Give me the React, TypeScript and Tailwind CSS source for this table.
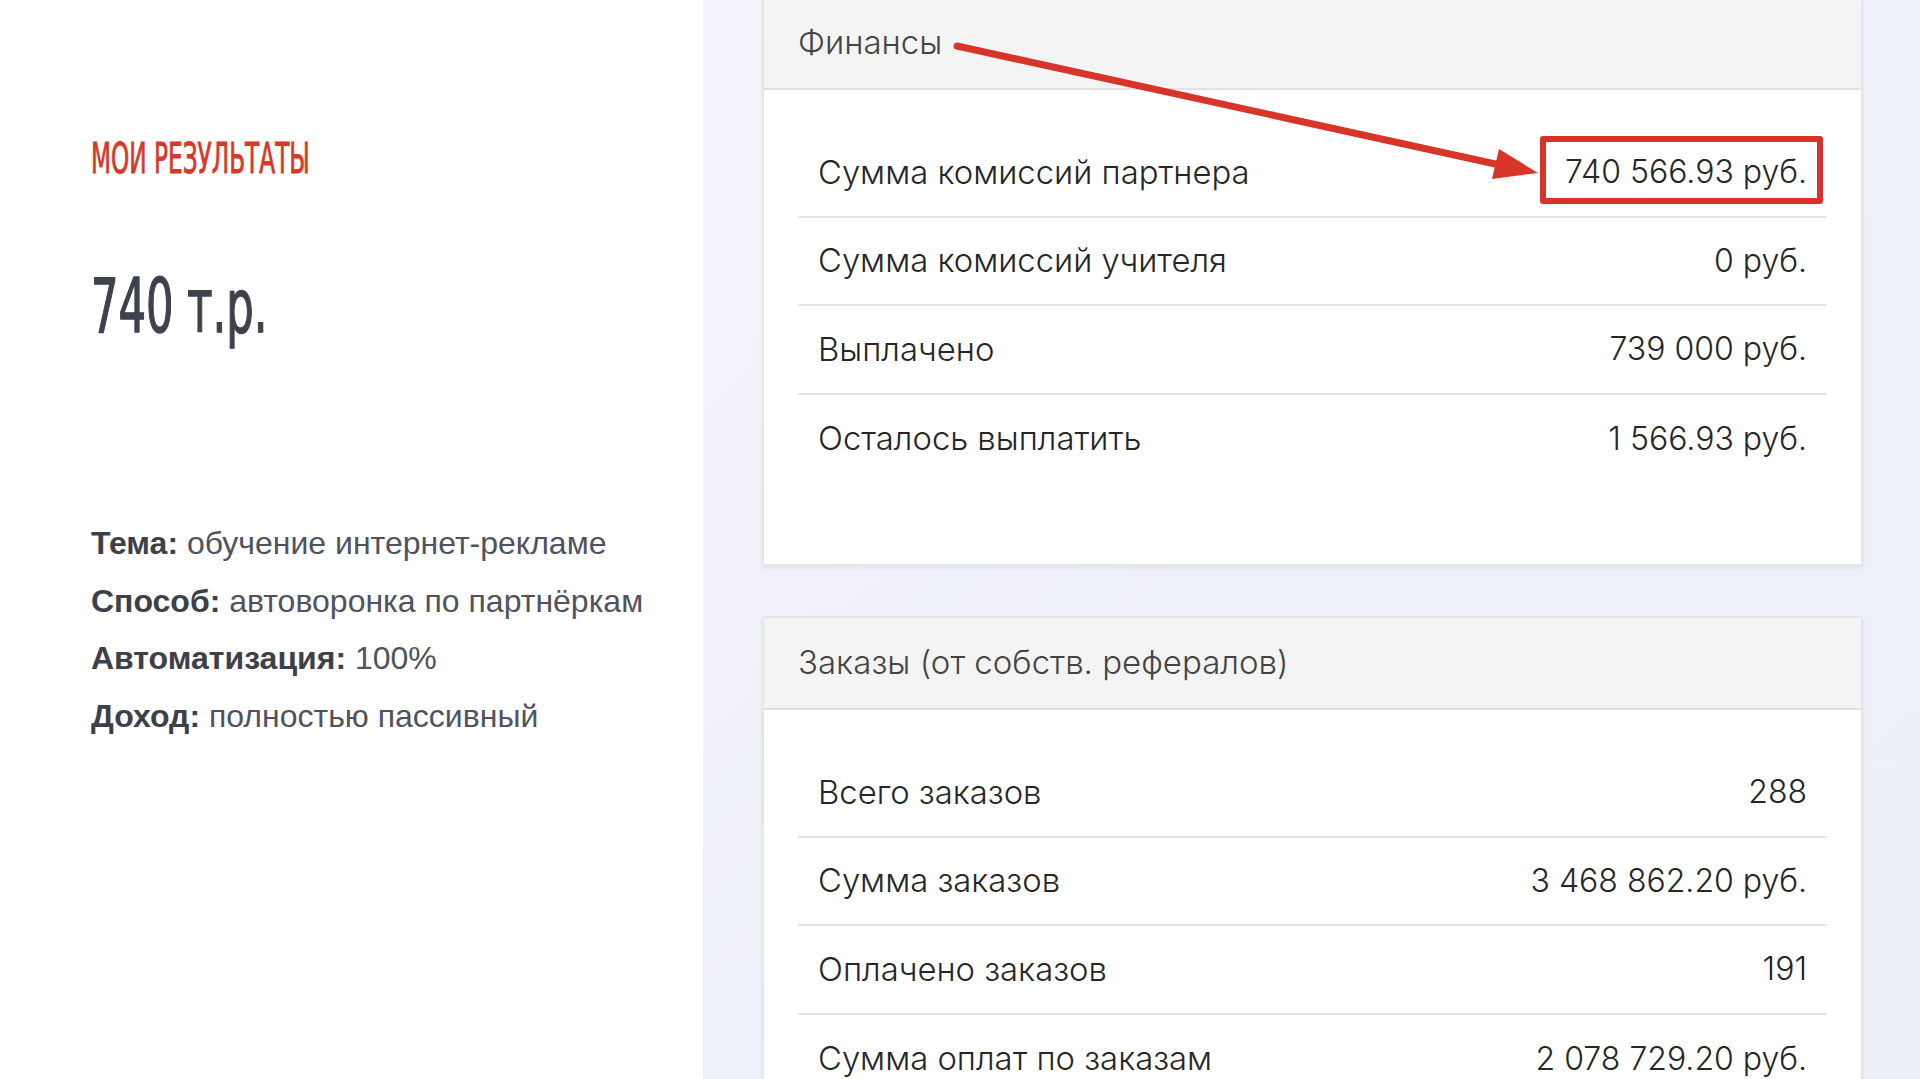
import React from 'react';

type Row = { label: string; value: string; highlight?: boolean };

const finance: Row[] = [
  { label: 'Сумма комиссий партнера', value: '740 566.93 руб.', highlight: true },
  { label: 'Сумма комиссий учителя', value: '0 руб.' },
  { label: 'Выплачено', value: '739 000 руб.' },
  { label: 'Осталось выплатить', value: '1 566.93 руб.' },
];

const orders: Row[] = [
  { label: 'Всего заказов', value: '288' },
  { label: 'Сумма заказов', value: '3 468 862.20 руб.' },
  { label: 'Оплачено заказов', value: '191' },
  { label: 'Сумма оплат по заказам', value: '2 078 729.20 руб.' },
];

const facts = [
  { k: 'Тема:', v: 'обучение интернет-рекламе' },
  { k: 'Способ:', v: 'автоворонка по партнёркам' },
  { k: 'Автоматизация:', v: '100%' },
  { k: 'Доход:', v: 'полностью пассивный' },
];

const condensed = { fontFamily: '"Liberation Sans Narrow", "DejaVu Sans Condensed", sans-serif' };

const StatRow: React.FC<{ row: Row; last: boolean }> = ({ row, last }) => (
  <div className={`h-[88.5px] flex items-center justify-between px-[20px] ${last ? '' : 'border-b-2 border-[#e4e4e6]'}`}>
    <span className="text-[32.8px]">{row.label}</span>
    {row.highlight ? (
      <span className="relative">
        {row.value}
        {/* red frame from the annotation */}
        <span className="absolute -left-[25px] -right-[16px] -top-[12px] -bottom-[8px] border-[6px] border-[#d8322a] rounded-[3px]" />
      </span>
    ) : (
      <span>{row.value}</span>
    )}
  </div>
);

const Card: React.FC<{ title: string; rows: Row[]; className?: string }> = ({ title, rows, className }) => (
  <div className={`bg-white border-2 border-[#e6e6ea] shadow-[0_2px_4px_rgba(0,0,0,0.06)] ${className ?? ''}`}>
    <div className="h-[92px] bg-[#f4f4f4] border-b-2 border-[#e2e2e4] flex items-center px-[34px] text-[33px] text-[#444] font-light">
      {title}
    </div>
    <div className="px-[34px] pt-[39px] text-[32px] font-light text-[#262626]">
      {rows.map((r, i) => (
        <StatRow key={r.label} row={r} last={i === rows.length - 1} />
      ))}
    </div>
  </div>
);

export default function App() {
  return (
    <div
      className="relative w-[1920px] h-[1079px] overflow-hidden flex"
      style={{ fontFamily: 'Inter, "Noto Sans", sans-serif' }}
    >
      {/* left column */}
      <div className="w-[703px] shrink-0 bg-white pl-[91px] pt-[137px]">
        <div
          className="text-[43px] leading-none text-[#d6392a] origin-left scale-x-[0.6] [-webkit-text-stroke:0.9px_#d6392a]"
          style={condensed}
        >
          МОИ РЕЗУЛЬТАТЫ
        </div>
        <div
          className="mt-[89px] text-[74px] leading-none text-[#3f424d] origin-left scale-x-[0.65] [-webkit-text-stroke:1.4px_#3f424d]"
          style={condensed}
        >
          740 т.р.
        </div>
        <div
          className="mt-[172px] flex flex-col text-[32px] leading-[57.5px] text-[#50535d]"
          style={{ fontFamily: '"Liberation Sans", Arial, sans-serif' }}
        >
          {facts.map(f => (
            <div key={f.k}>
              <span className="font-bold text-[#3d4049]">{f.k}</span> {f.v}
            </div>
          ))}
        </div>
      </div>

      {/* right column */}
      <div className="flex-1 bg-gradient-to-br from-[#f3f4fb] via-[#eef0f9] to-[#eceef8] pl-[59px] pr-[57px]">
        <Card title="Финансы" rows={finance} className="-mt-[4px] h-[570px]" />
        <Card title="Заказы (от собств. рефералов)" rows={orders} className="mt-[50px]" />
      </div>

      {/* annotation arrow */}
      <svg className="absolute inset-0 pointer-events-none" width="1920" height="1079" viewBox="0 0 1920 1079">
        <line x1="957" y1="46" x2="1500" y2="165" stroke="#d8352a" strokeWidth="7" strokeLinecap="round" />
        <polygon points="1538,173 1492,179 1499,149" fill="#d8352a" />
      </svg>
    </div>
  );
}
